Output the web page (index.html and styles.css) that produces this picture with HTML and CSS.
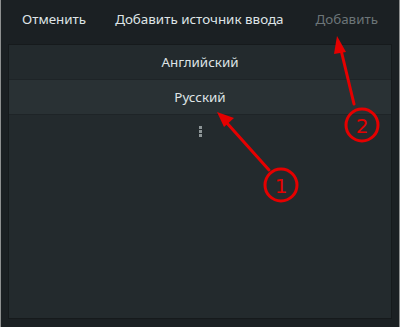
FILE: index.html
```html
<!DOCTYPE html>
<html lang="ru">
<head>
    <meta charset="UTF-8">
    <meta name="viewport" content="width=device-width, initial-scale=1.0">
    <title>Добавить источник ввода</title>
    <link rel="stylesheet" href="styles.css">
</head>
<body>
    <div class="dialog">
        <div class="header">
            <div class="btn">Отменить</div>
            <div class="title">Добавить источник ввода</div>
            <div class="btn disabled">Добавить</div>
        </div>
        <div class="list">
            <div class="row">Английский</div>
            <div class="row selected">Русский</div>
            <div class="more">
                <span></span><span></span><span></span>
            </div>
        </div>

        <!-- annotation arrows drawn over the screenshot -->
        <svg class="marks" width="400" height="327" viewBox="0 0 400 327">
            <g stroke="#e50000" stroke-width="3" fill="none" stroke-linecap="round">
                <line x1="269" y1="170" x2="226" y2="122"/>
                <circle cx="281" cy="185" r="16"/>
                <line x1="354" y1="104" x2="341" y2="50"/>
                <circle cx="362" cy="125" r="16"/>
            </g>
            <g fill="#e50000">
                <polygon points="217,112 234,118 224,127"/>
                <polygon points="337,36 346,52 334,54"/>
            </g>
            <g fill="#e50000" font-family="'DejaVu Sans', sans-serif" font-size="20" text-anchor="middle">
                <text x="281" y="193">1</text>
                <text x="362" y="133">2</text>
            </g>
        </svg>
    </div>
</body>
</html>
```

FILE: styles.css
```css
body {
    margin: 0;
    padding: 0;
    background-color: #1b2023;
    font-family: "Noto Sans", "Open Sans", sans-serif;
}

.dialog {
    position: relative;
    width: 400px;
    height: 327px;
    box-sizing: border-box;
    background-color: #1b2023;
    border-left: 1px solid #8e9090;
    border-right: 1px solid #8e9090;
    display: flex;
    flex-direction: column;
}

.header {
    display: flex;
    align-items: center;
    height: 38px;
    padding: 0 21px 0 21px;
    font-size: 13.4px;
    color: #dfe4e6;
}

.header .title {
    margin-left: 29px;
}

.header .btn.disabled {
    margin-left: auto;
    color: #6c7578;
}

.list {
    flex: 1;
    margin: 6px 7px 8px 7px;
    background-color: #232a2d;
    border: 1px solid #161a1c;
}

.row {
    height: 34px;
    display: flex;
    align-items: center;
    justify-content: center;
    font-size: 13.4px;
    color: #dfe4e6;
    border-bottom: 1px solid #1e2427;
}

.row.selected {
    background-color: #293134;
}

.more {
    display: flex;
    flex-direction: column;
    align-items: center;
    gap: 1px;
    padding-top: 11px;
}

.more span {
    width: 3px;
    height: 3px;
    background-color: #8d9597;
}

.marks {
    position: absolute;
    left: -1px;
    top: 0;
}
```
